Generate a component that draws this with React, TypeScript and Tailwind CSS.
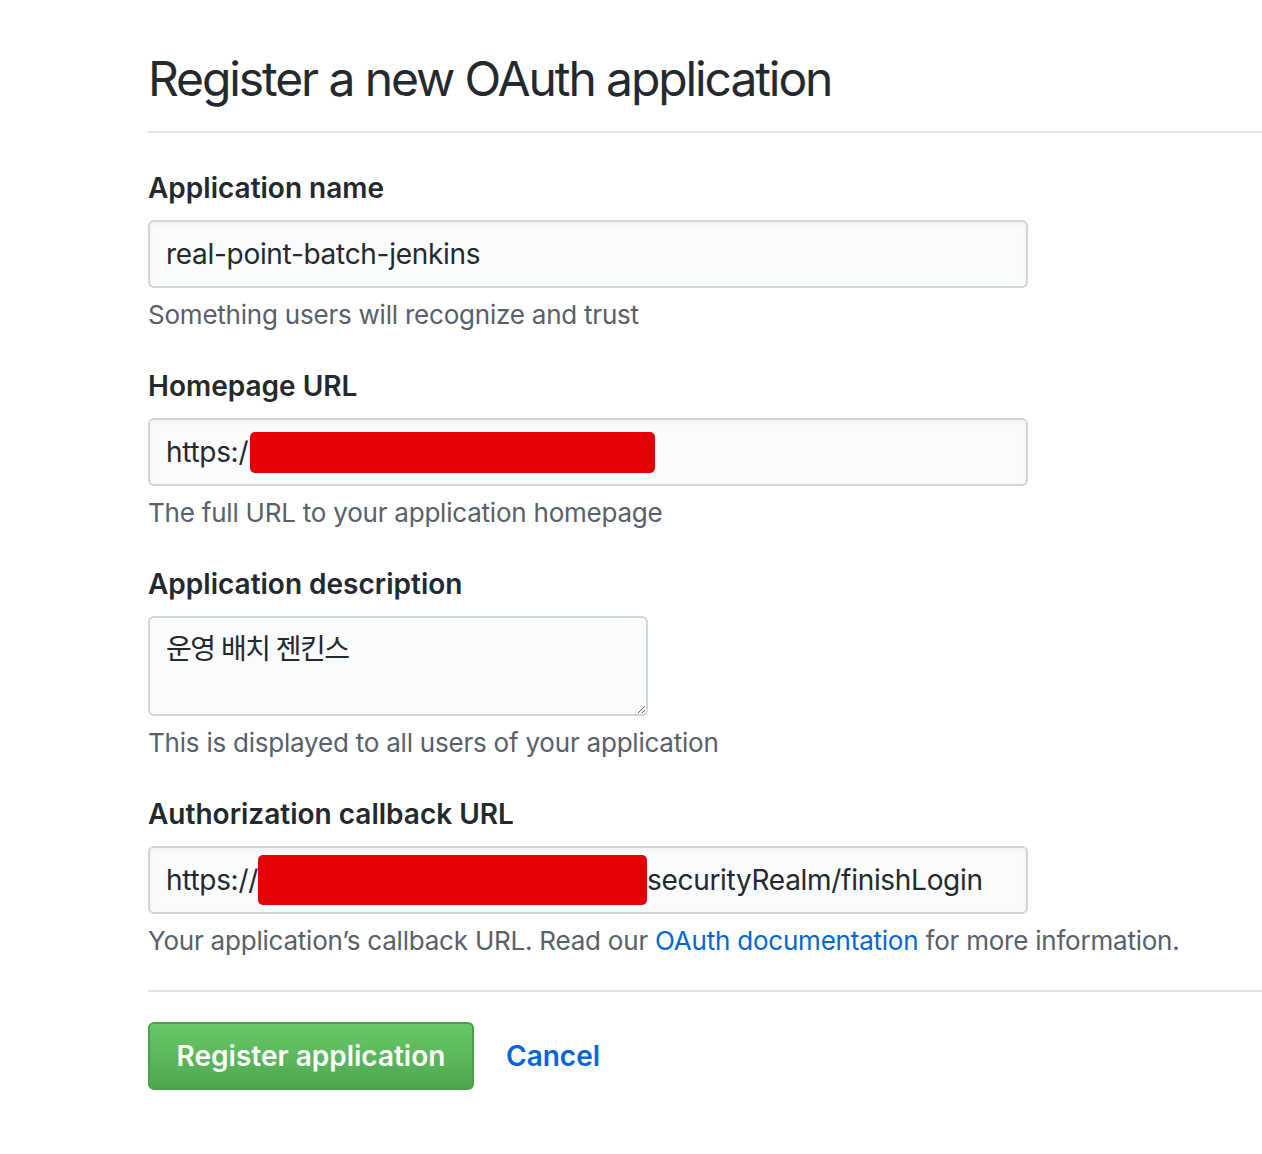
import React from 'react';

const FONT = "font-['Inter','Roboto','Noto_Sans_CJK_KR',sans-serif]";

function Field({
  label,
  hint,
  children,
}: {
  label: string;
  hint: React.ReactNode;
  children: React.ReactNode;
}) {
  return (
    <div className="mb-[35px]">
      <div className="text-[28px] leading-[36px] font-semibold text-[#24292e]">{label}</div>
      <div className="mt-[14px]">{children}</div>
      <div className="mt-[9px] text-[26px] leading-[36px] tracking-[-0.22px] text-[#586069]">{hint}</div>
    </div>
  );
}

function FakeInput({ children }: { children: React.ReactNode }) {
  return (
    <div className="flex h-[68px] w-[880px] items-center rounded-[6px] border-2 border-[#d1d5da] bg-[#fafbfc] px-4 text-[28px] tracking-[-0.3px] text-[#24292e] shadow-[inset_0_2px_4px_rgba(27,31,35,0.04)]">
      {children}
    </div>
  );
}

export default function App() {
  return (
    <div className={`min-h-screen bg-white ${FONT}`}>
      <div className="pl-[148px] pt-[49px]">
        <h2 className="border-b-2 border-[#e1e4e8] pb-[22px] text-[48px] font-normal leading-[60px] tracking-[-2.1px] text-[#24292e]">
          Register a new OAuth application
        </h2>

        <div className="mt-[37px]">
          <Field label="Application name" hint="Something users will recognize and trust">
            <FakeInput>real-point-batch-jenkins</FakeInput>
          </Field>

          <Field label="Homepage URL" hint="The full URL to your application homepage">
            <FakeInput>
              <span>https:/</span>
              <span className="ml-[2px] h-[41px] w-[405px] rounded-[5px] bg-[#e30304]" />
            </FakeInput>
          </Field>

          <Field label="Application description" hint="This is displayed to all users of your application">
            <textarea
              readOnly
              value="운영 배치 젠킨스"
              className="block h-[100px] w-[500px] resize rounded-[6px] border-2 border-[#d1d5da] bg-[#fafbfc] px-4 py-[13px] text-[28px] leading-[36px] tracking-[-1.5px] text-[#24292e] outline-none"
            />
          </Field>

          <Field
            label="Authorization callback URL"
            hint={
              <>
                Your application’s callback URL. Read our{' '}
                <a className="text-[#0366d6]" href="#">
                  OAuth documentation
                </a>{' '}
                for more information.
              </>
            }
          >
            <FakeInput>
              <span>https://</span>
              <span className="h-[50px] w-[389px] rounded-[5px] bg-[#e30304]" />
              <span>securityRealm/finishLogin</span>
            </FakeInput>
          </Field>
        </div>

        <div className="mt-[-4px] border-t-2 border-[#e1e4e8] pt-[30px]">
          <div className="flex items-center gap-[32px]">
            <button className="h-[68px] w-[326px] rounded-[6px] border-2 border-[#4a9e4c] bg-gradient-to-b from-[#67c968] to-[#4fa650] text-[28px] font-semibold text-white">
              Register application
            </button>
            <a href="#" className="text-[28px] font-semibold text-[#0366d6]">
              Cancel
            </a>
          </div>
        </div>
      </div>
    </div>
  );
}
